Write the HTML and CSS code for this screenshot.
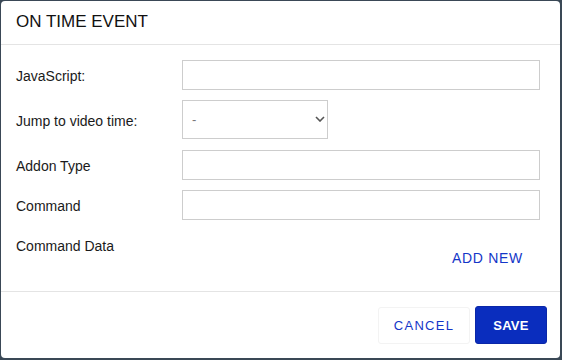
FILE: index.html
```html
<!DOCTYPE html>
<html>
<head>
<meta charset="utf-8">
<link rel="stylesheet" href="styles.css">
</head>
<body>
<div class="dialog">
  <div class="dialog-header">ON TIME EVENT</div>
  <div class="dialog-body">
    <div class="form-grid">
      <label class="field-label">JavaScript:</label>
      <input class="text-input" type="text">
      <label class="field-label">Jump to video time:</label>
      <div class="select-wrap">
        <select class="select-input"><option>-</option></select>
        <svg class="chevron" width="10" height="6" viewBox="0 0 10 6"><path d="M1 1l4 4 4-4" fill="none" stroke="#555" stroke-width="1.6"/></svg>
      </div>
      <label class="field-label">Addon Type</label>
      <input class="text-input" type="text">
      <label class="field-label">Command</label>
      <input class="text-input" type="text">
    </div>
    <div class="data-row">
      <span class="field-label">Command Data</span>
      <button class="link-btn">ADD NEW</button>
    </div>
  </div>
  <div class="dialog-footer">
    <button class="btn btn-cancel">CANCEL</button>
    <button class="btn btn-save">SAVE</button>
  </div>
</div>
</body>
</html>
```
FILE: styles.css
```css
* { box-sizing: border-box; }
html, body { margin: 0; padding: 0; }
body {
  width: 562px;
  height: 360px;
  background: #3a4856;
  font-family: "Liberation Sans", Arial, sans-serif;
  padding: 1px 2px 2px 1px;
  overflow: hidden;
}
.dialog {
  background: #fff;
  width: 559px;
  height: 357px;
  border-radius: 4px;
  display: flex;
  flex-direction: column;
}
.dialog-header {
  height: 44px;
  padding: 11px 15px 0;
  font-size: 17px;
  color: #111;
  border-bottom: 1px solid #e4e4e4;
  line-height: 20px;
}
.dialog-body {
  padding: 15px 19px 15px 15px;
  border-bottom: 1px solid #e4e4e4;
}
.form-grid {
  display: grid;
  grid-template-columns: 166px 358px;
  row-gap: 10px;
  align-items: center;
}
.field-label {
  font-size: 14px;
  color: #1a1a1a;
  height: 30px;
  line-height: 32px;
}
.text-input {
  height: 30px;
  border: 1px solid #cdcdcd;
  border-radius: 0;
  margin: 0;
  font: inherit;
}
.select-wrap {
  position: relative;
  width: 146px;
  height: 39px;
  margin-bottom: 1px;
}
.select-input {
  appearance: none;
  -webkit-appearance: none;
  width: 146px;
  height: 39px;
  border: 1px solid #cdcdcd;
  border-radius: 0;
  background: #fff;
  padding: 0 0 0 9px;
  font-family: "Liberation Sans", Arial, sans-serif;
  font-size: 13px;
  color: #777;
  margin: 0;
}
.chevron {
  position: absolute;
  right: 3px;
  top: 16px;
}
.data-row {
  margin-top: 10px;
  display: flex;
  justify-content: space-between;
  align-items: flex-start;
}
.link-btn {
  margin-top: 10px;
  height: 36px;
  padding: 0 18px 0 16px;
  background: none;
  border: 0;
  font-family: "Liberation Sans", Arial, sans-serif;
  font-size: 14px;
  font-weight: 500;
  letter-spacing: 0.7px;
  color: #1436c8;
}
.dialog-footer {
  flex: 1;
  display: flex;
  justify-content: flex-end;
  align-items: center;
  gap: 5px;
  padding: 0 13px 0 0;
}
.btn {
  height: 37px;
  font-family: "Liberation Sans", Arial, sans-serif;
  font-size: 13px;
  letter-spacing: 1.3px;
  border-radius: 3px;
  margin: 0;
}
.btn-cancel {
  width: 92px;
  background: #fff;
  border: 1px solid #f3f3f3;
  color: #1436c8;
  padding: 0;
}
.btn-save {
  width: 72px;
  height: 38px;
  background: #0a2dbe;
  border: 1px solid #0a27a8;
  color: #fff;
  font-weight: bold;
  letter-spacing: 0.3px;
}
```
